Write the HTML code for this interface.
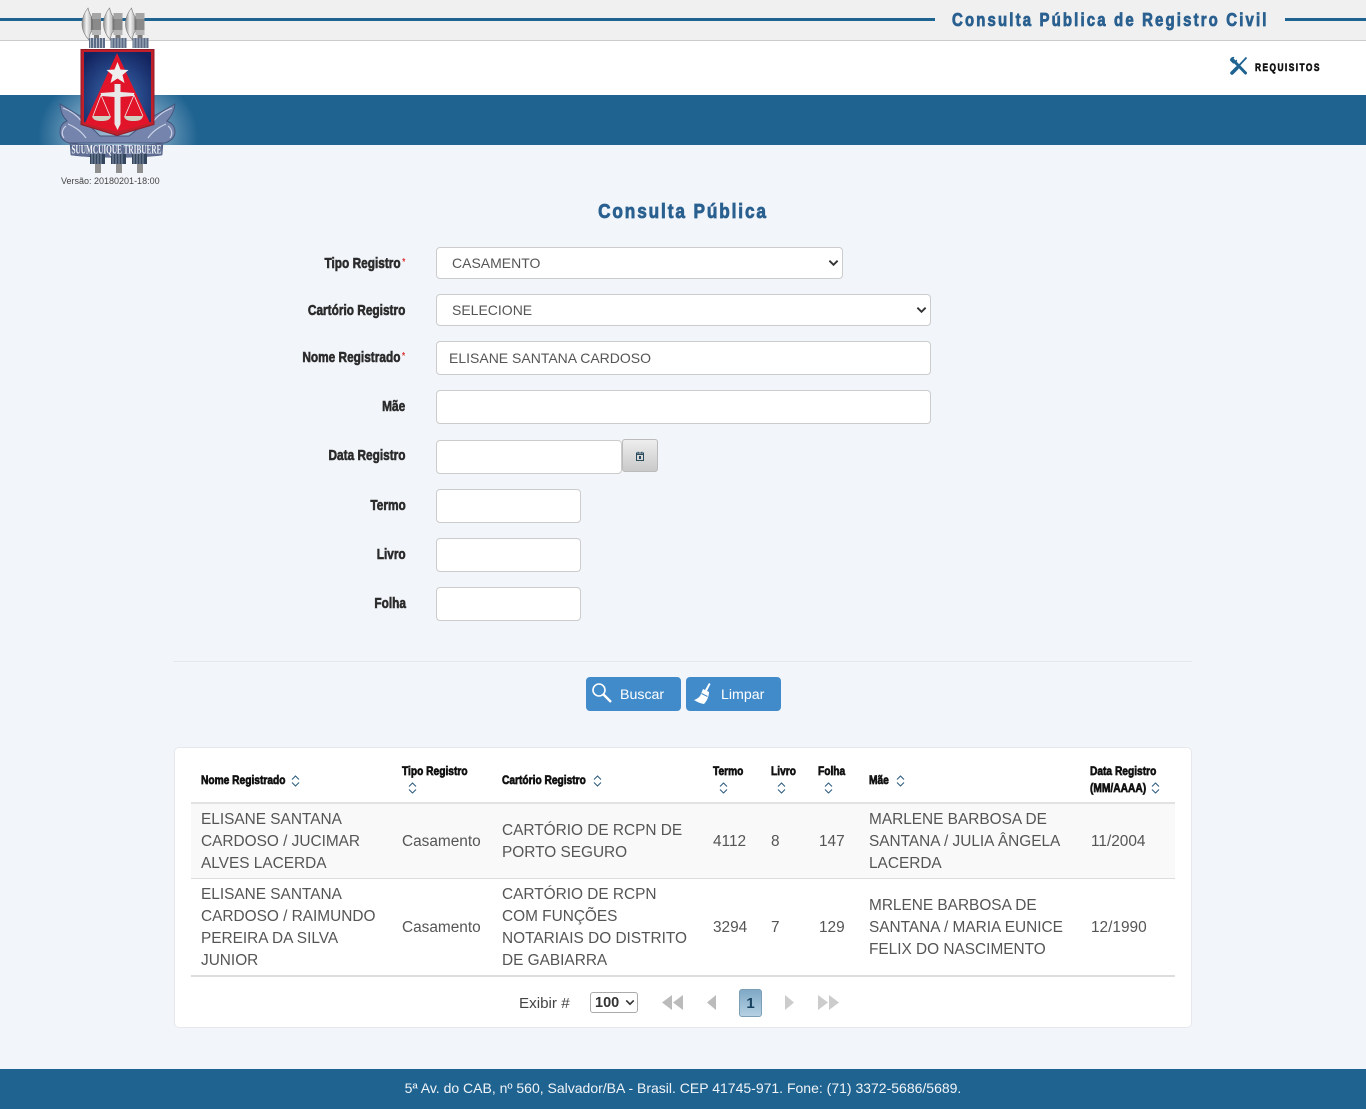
<!DOCTYPE html>
<html lang="pt-BR"><head><meta charset="utf-8"><title>Consulta Pública de Registro Civil</title>
<style>
*{box-sizing:border-box}
html,body{margin:0;padding:0}
body{position:relative;width:1366px;height:1109px;overflow:hidden;background:#f2f5fa;font-family:"Liberation Sans",sans-serif;color:#555}
.a{position:absolute;white-space:nowrap}
.bar{position:absolute;background:#1f6391}
.l{position:absolute;right:960.500px;white-space:nowrap;font:bold 15px/20px "Liberation Sans",sans-serif;color:#2b2b2b;-webkit-text-stroke:.6px #2b2b2b;text-align:right;transform:scaleX(.79);transform-origin:right center}
.l i{font-style:normal;color:#d33;font-size:10px;line-height:0;vertical-align:3px;margin-left:2px;-webkit-text-stroke:0}
.i{position:absolute;background:#fff;border:1px solid #ccc;border-radius:4px;font-size:14px;line-height:33px;color:#555;padding-left:12px;white-space:nowrap}
.s{position:absolute;background:#fff;border:1px solid #ccc;border-radius:4px;font-size:14px;line-height:30px;color:#555;padding-left:15px}
.s svg{position:absolute;right:3px;top:11px}
.btn{position:absolute;top:677px;width:95px;height:34px;background:#428bca;border-radius:4px;color:#fff;font-size:14.200px;line-height:36px}
.th{position:absolute;white-space:nowrap;font:bold 12px/17px "Liberation Sans",sans-serif;color:#111;-webkit-text-stroke:.65px #111;transform:scaleX(.85);transform-origin:left center}
.t{position:absolute;white-space:nowrap;font-size:15.400px;line-height:22px;color:#555}
.so{position:absolute}
</style></head><body>
<svg width="0" height="0" style="position:absolute"><defs>
<symbol id="so" viewBox="0 0 9 12"><path d="M1 4.500 4.500 1 8 4.500M1 7.500 4.500 11 8 7.500" fill="none" stroke="#2f5f7f" stroke-width="1.100"/></symbol>
<symbol id="ch" viewBox="0 0 12 8"><path d="M1.500 1.500 6 6l4.500-4.500" fill="none" stroke="#333" stroke-width="2"/></symbol>
</defs></svg>

<div class="a" style="left:0;top:0;width:1366px;height:41px;background:#f0f0f0;border-bottom:1px solid #ccc"></div>
<div class="a" style="left:0;top:41px;width:1366px;height:54px;background:#fff"></div>
<div class="bar" style="left:0;top:18px;width:935px;height:3px"></div>
<div class="bar" style="left:1285px;top:18px;width:81px;height:3px"></div>
<div class="a" style="left:952px;top:9px;font-size:18px;line-height:22px;font-weight:bold;color:#2a6090;letter-spacing:2.600px;-webkit-text-stroke:.8px #2a6090;transform:scaleX(.83);transform-origin:left center">Consulta Pública de Registro Civil</div>

<svg class="a" style="left:1229px;top:56px" width="20" height="20" viewBox="0 0 20 20"><path d="M4 4 16.500 17" stroke="#1f6391" stroke-width="3" stroke-linecap="round"/><path d="M1 4.500C1 2 3 .5 5.500 1L4 3.500 5.500 5 8 3.500C8.500 6 6.500 8 4 7.500Z" fill="#1f6391"/><path d="M17.500 1.500 3.500 16.500" stroke="#1f6391" stroke-width="1.800"/><path d="M8 12 3 17" stroke="#1f6391" stroke-width="3.600" stroke-linecap="round"/></svg>
<div class="a" style="left:1255px;top:61px;font:bold 11px/15px 'Liberation Sans',sans-serif;letter-spacing:1.900px;color:#111;-webkit-text-stroke:.6px #111;transform:scaleX(.76);transform-origin:left center">REQUISITOS</div>

<div class="a" style="left:0;top:95px;width:1366px;height:50px;background:#1f6391"></div>
<div class="a" style="left:0;top:95px;width:260px;height:50px;background:radial-gradient(ellipse 80px 65px at 118px 40px,rgba(225,235,245,.7) 0,rgba(190,212,230,.45) 60%,rgba(31,99,145,0) 100%)"></div>

<!-- Brasão -->
<svg class="a" style="left:55px;top:5px" width="125" height="172" viewBox="55 5 125 172">
<defs>
<linearGradient id="ax" x1="0" x2="1"><stop offset="0" stop-color="#8a8a8a"/><stop offset=".45" stop-color="#f4f4f4"/><stop offset="1" stop-color="#aaa"/></linearGradient>
<radialGradient id="bl" cx=".5" cy=".6" r=".7"><stop offset="0" stop-color="#3e6fb4"/><stop offset="1" stop-color="#12235f"/></radialGradient>
<g id="axe">
<path d="M88 8c-4 5-6 10-6 16 0 6 3 12 7 16 0-4 1-7 3-9V17c-2-2-3-5-4-9Z" fill="url(#ax)" stroke="#777" stroke-width=".6"/>
<rect x="91" y="17" width="3" height="13" fill="#777"/>
<rect x="92" y="13" width="9" height="6" fill="#a5a5a5"/><rect x="93" y="19" width="8" height="11" fill="#8a8a8a"/><rect x="92" y="30" width="9" height="5" fill="#b5b5b5"/>
<rect x="94" y="35" width="5" height="4" fill="#777"/>
<path d="M89 38h16v10H89Z" fill="#5c6c86"/><path d="M90.500 38v10M93.500 38v10M96.500 38v10M99.500 38v10M102.500 38v10" stroke="#d5dae2" stroke-width=".7"/>
</g>
<g id="ft"><path d="M90 154h15v10H90Z" fill="#33465e"/><path d="M92 154v10M95 154v10M98 154v10M101 154v10" stroke="#a8b4c4" stroke-width=".7"/><rect x="95" y="164" width="6" height="9" fill="#8f8f8f"/></g>
</defs>
<use href="#axe"/><use href="#axe" x="21.500"/><use href="#axe" x="43.500"/>
<path d="M80 116 60 104c1 9 3 13 7 17-5 2-7 6-7 11 0 5 3 9 9 11l96 0c6-2 10-6 10-11 0-5-3-9-8-11 4-4 7-9 8-17l-21 12-25 20H100Z" fill="#7584ad" stroke="#46557a" stroke-width="1"/>
<path d="M63 108c8 3 14 7 19 14M172 108c-8 3-14 7-19 14M66 126c-4 3-5 8-2 12M168 126c4 3 5 8 2 12M68 124c7 3 14 8 18 14M166 124c-7 3-14 8-18 14" fill="none" stroke="#c9d2e6" stroke-width="1.200"/>
<path d="M81 49.500h73v75l-37 11-36-11Z" fill="#c1202b" stroke="#8d1d2b"/>
<path d="M84 52h67v70l-33.500 10L84 122Z" fill="url(#bl)"/>
<path d="M117 53 150 123 117 132 85 123Z" fill="#e2142a"/>
<path d="m117.500 62 3 7.500 8 .5-6 5 2 8-7-4.500-7 4.500 2-8-6-5 8-.5Z" fill="#eee"/>
<path d="M114.500 84h6v8l14 1-1 3-13 1v27l-3 6-3-6V97l-13-1-1-3 14-1Z" fill="#e8e8e8"/>
<path d="M101 95 93 116M101 95 110 116M134 95l-9 21M134 95l9 21" stroke="#eee" stroke-width=".8" fill="none"/>
<path d="M92 116h19c-1 4-4 5-9.500 5s-8.500-1-9.500-5ZM124 116h19c-1 4-4 5-9.500 5s-8.500-1-9.500-5Z" fill="#cfcfc2"/>
<path d="M70 143c15 3 78 3 93 0l-1 12c-20 3-71 3-91 0Z" fill="#5f6e92" stroke="#46557a" stroke-width=".6"/>
<use href="#ft"/><use href="#ft" x="21"/><use href="#ft" x="42"/>
<text x="116.500" y="153.500" text-anchor="middle" textLength="90" lengthAdjust="spacingAndGlyphs" font-family="Liberation Serif,serif" font-weight="bold" font-size="13" fill="#f2f4fa">SUUMCUIQUE TRIBUERE</text>
</svg>
<div class="a" style="left:61px;top:175px;font-size:9px;line-height:13px;color:#444">Versão: 20180201-18:00</div>

<div class="a" style="left:0;width:1366px;top:200px;text-align:center;font:bold 20px/24px 'Liberation Sans',sans-serif;color:#2a6090;letter-spacing:2.200px;-webkit-text-stroke:.8px #2a6090;transform:scaleX(.86);transform-origin:683px center">Consulta Pública</div>

<div class="l" style="top:254px">Tipo Registro<i>*</i></div>
<div class="s" style="left:436px;top:247px;width:407px;height:32px">CASAMENTO<svg width="11" height="8"><use href="#ch"/></svg></div>
<div class="l" style="top:301px">Cartório Registro</div>
<div class="s" style="left:436px;top:294px;width:495px;height:32px">SELECIONE<svg width="11" height="8"><use href="#ch"/></svg></div>
<div class="l" style="top:348px">Nome Registrado<i>*</i></div>
<div class="i" style="left:436px;top:341px;width:495px;height:34px">ELISANE SANTANA CARDOSO</div>
<div class="l" style="top:397px">Mãe</div>
<div class="i" style="left:436px;top:390px;width:495px;height:34px"></div>
<div class="l" style="top:446px">Data Registro</div>
<div class="i" style="left:436px;top:440px;width:186px;height:34px"></div>
<div class="a" style="left:622px;top:439px;width:36px;height:33px;border:1px solid #bbb;border-radius:3px;background:linear-gradient(#eee,#c9c9c9)"></div>
<svg class="a" style="left:635px;top:451px" width="10" height="11" viewBox="0 0 10 11"><rect x="1.500" y="2" width="7" height="7.500" fill="none" stroke="#2a4a5e" stroke-width="1"/><path d="M1.500 3.500h7M3.200.8v2M6.800.8v2" stroke="#2a4a5e"/><rect x="4" y="5" width="2" height="3" fill="#2a4a5e"/></svg>
<div class="l" style="top:496px">Termo</div>
<div class="i" style="left:436px;top:489px;width:145px;height:34px"></div>
<div class="l" style="top:545px">Livro</div>
<div class="i" style="left:436px;top:538px;width:145px;height:34px"></div>
<div class="l" style="top:594px">Folha</div>
<div class="i" style="left:436px;top:587px;width:145px;height:34px"></div>

<div class="a" style="left:173px;top:661px;width:1019px;height:1px;background:#e6e8ec"></div>

<div class="btn" style="left:586px"><span class="a" style="left:34px;top:0">Buscar</span>
<svg class="a" style="left:5px;top:5px" width="23" height="23" viewBox="0 0 23 23"><circle cx="8" cy="8" r="6" fill="none" stroke="#fff" stroke-width="1.600"/><path d="m12.500 12.500 7.500 7.500" stroke="#fff" stroke-width="2.400"/></svg></div>
<div class="btn" style="left:686px"><span class="a" style="left:35px;top:0">Limpar</span>
<svg class="a" style="left:7px;top:5px" width="20" height="23" viewBox="0 0 20 23"><path d="M16 1 17.500 2 14 9l-2-1ZM10 7l6 3c0 4-2 9-5 12-3-.5-7-2-10-4 3-1 6-3 7-6Z" fill="#fff"/><path d="M8.500 11.500l6 3" stroke="#428bca"/></svg></div>

<div class="a" style="left:174px;top:747px;width:1018px;height:281px;background:#fff;border:1px solid #e6e8ec;border-radius:5px"></div>
<div class="a" style="left:191px;top:803px;width:984px;height:75px;background:#f9f9f9"></div>
<div class="a" style="left:191px;top:802px;width:984px;height:2px;background:#e2e2e2"></div>
<div class="a" style="left:191px;top:878px;width:984px;height:1px;background:#ddd"></div>
<div class="a" style="left:191px;top:975px;width:984px;height:2px;background:#ddd"></div>

<div class="th" style="left:201px;top:772px">Nome Registrado</div><svg class="so" style="left:291px;top:775px" width="9" height="12"><use href="#so"/></svg>
<div class="th" style="left:402px;top:763px">Tipo Registro</div><svg class="so" style="left:408px;top:782px" width="9" height="12"><use href="#so"/></svg>
<div class="th" style="left:502px;top:772px">Cartório Registro</div><svg class="so" style="left:593px;top:775px" width="9" height="12"><use href="#so"/></svg>
<div class="th" style="left:713px;top:763px">Termo</div><svg class="so" style="left:719px;top:782px" width="9" height="12"><use href="#so"/></svg>
<div class="th" style="left:771px;top:763px">Livro</div><svg class="so" style="left:777px;top:782px" width="9" height="12"><use href="#so"/></svg>
<div class="th" style="left:818px;top:763px">Folha</div><svg class="so" style="left:824px;top:782px" width="9" height="12"><use href="#so"/></svg>
<div class="th" style="left:869px;top:772px">Mãe</div><svg class="so" style="left:896px;top:775px" width="9" height="12"><use href="#so"/></svg>
<div class="th" style="left:1090px;top:763px">Data Registro</div>
<div class="th" style="left:1090px;top:780px">(MM/AAAA)</div><svg class="so" style="left:1151px;top:782px" width="9" height="12"><use href="#so"/></svg>

<div class="t" style="left:201px;top:809px">ELISANE SANTANA<br>CARDOSO / JUCIMAR<br>ALVES LACERDA</div>
<div class="t" style="left:402px;top:831px">Casamento</div>
<div class="t" style="left:502px;top:820px">CARTÓRIO DE RCPN DE<br>PORTO SEGURO</div>
<div class="t" style="left:713px;top:831px">4112</div>
<div class="t" style="left:771px;top:831px">8</div>
<div class="t" style="left:819px;top:831px">147</div>
<div class="t" style="left:869px;top:809px">MARLENE BARBOSA DE<br>SANTANA / JULIA ÂNGELA<br>LACERDA</div>
<div class="t" style="left:1091px;top:831px">11/2004</div>

<div class="t" style="left:201px;top:884px">ELISANE SANTANA<br>CARDOSO / RAIMUNDO<br>PEREIRA DA SILVA<br>JUNIOR</div>
<div class="t" style="left:402px;top:917px">Casamento</div>
<div class="t" style="left:502px;top:884px">CARTÓRIO DE RCPN<br>COM FUNÇÕES<br>NOTARIAIS DO DISTRITO<br>DE GABIARRA</div>
<div class="t" style="left:713px;top:917px">3294</div>
<div class="t" style="left:771px;top:917px">7</div>
<div class="t" style="left:819px;top:917px">129</div>
<div class="t" style="left:869px;top:895px">MRLENE BARBOSA DE<br>SANTANA / MARIA EUNICE<br>FELIX DO NASCIMENTO</div>
<div class="t" style="left:1091px;top:917px">12/1990</div>

<div class="a" style="left:519px;top:993px;font-size:15.200px;line-height:22px;color:#444">Exibir #</div>
<div class="a" style="left:590px;top:992px;width:48px;height:21px;border:1px solid #aaa;border-radius:3px;background:#fff;font-weight:bold;font-size:14.500px;line-height:20px;color:#333;padding-left:4px">100<svg class="a" style="left:34px;top:6px" width="10" height="7"><use href="#ch"/></svg></div>
<svg class="a" style="left:660px;top:994px" width="180" height="18" viewBox="660 994 180 18"><path d="M672 995v15l-10-7.500ZM683 995v15l-10-7.500ZM716 995v15l-9-7.500Z" fill="#bbb"/><path d="M785 995v15l9-7.500ZM818 995v15l10-7.500ZM829 995v15l10-7.500Z" fill="#ccc"/></svg>
<div class="a" style="left:739px;top:989px;width:23px;height:28px;border:1px solid #7d9fb5;border-radius:3px;background:linear-gradient(#7fa9c6,#b5d0e2);color:#17415f;font-weight:bold;font-size:15px;line-height:27px;text-align:center">1</div>

<div class="a" style="left:0;top:1069px;width:1366px;height:40px;background:#1f6391;color:#f0f4f8;font-size:14px;line-height:39px;text-align:center">5ª Av. do CAB, nº 560, Salvador/BA - Brasil. CEP 41745-971. Fone: (71) 3372-5686/5689.</div>
</body></html>
